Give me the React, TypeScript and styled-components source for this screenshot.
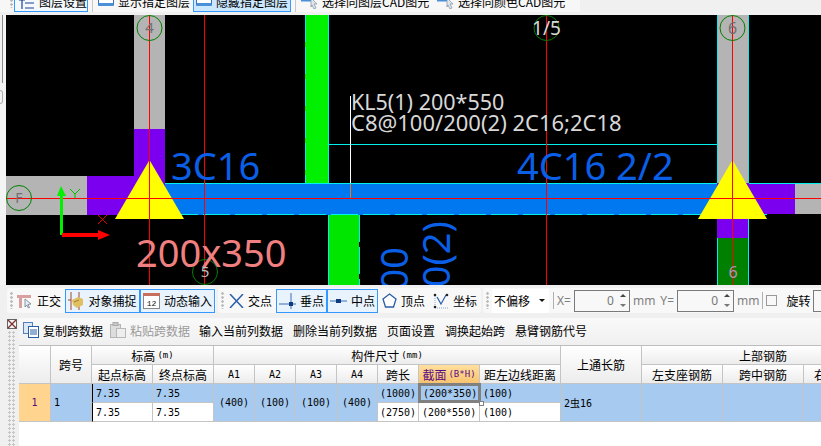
import React from "react";
import styled, { createGlobalStyle, css } from "styled-components";

const GlobalStyle = createGlobalStyle`
  html, body { margin: 0; padding: 0; background: #f0f0f0; }
  body { font-family: "Noto Sans CJK SC", "Noto Sans", sans-serif; font-size: 12px; color: #000; }
`;

const CJK = `"Noto Sans CJK SC", "Noto Sans", sans-serif`;
const MONO = `"DejaVu Sans Mono", "Noto Sans CJK SC", monospace`;
const CAD = `"Noto Sans", "Open Sans", sans-serif`;

const Page = styled.div`
  width: 821px;
  height: 446px;
  overflow: hidden;
  display: flex;
  flex-direction: column;
  background: #f0f0f0;
`;

/* ---- top toolbar, cut off by the window edge ---- */
const TopBar = styled.div`
  height: 15px;
  flex: none;
  overflow: hidden;
  background: #f0f0f0;
`;
const TopRow = styled.div`
  display: flex;
  align-items: stretch;
  height: 21px;
  margin-top: -9px;
  padding-left: 10px;
  width: 570px;
  background: #f7f7f7;
`;
const TopButton = styled.div<{ $w: number; $pad: number; $state?: "hover" | "pressed" }>`
  width: ${p => p.$w}px;
  flex: none;
  box-sizing: border-box;
  display: flex;
  align-items: center;
  gap: 4px;
  padding-left: ${p => p.$pad}px;
  white-space: nowrap;
  border: 1px solid transparent;
  svg { flex: none; }
  ${p =>
    p.$state === "hover" &&
    css`
      margin-left: 1px;
      border-color: #3399ff;
      background: #f4f9ff;
    `}
  ${p =>
    p.$state === "pressed" &&
    css`
      border-color: #3399ff;
      background: #cce8ff;
    `}
`;
const TopSep = styled.div`
  width: 1px;
  margin: 0 4px;
  background: #c8c8c8;
`;

/* ---- drawing area ---- */
const CanvasRow = styled.div`
  display: flex;
  height: 270px;
  flex: none;
`;
const SideStrip = styled.div`
  width: 6px;
  flex: none;
  background: #f4f4f4;
`;
const SideLine = styled.div`
  width: 3px;
  height: 68px;
  box-sizing: border-box;
  border-right: 1px solid #8a8a8a;
  background: #f0f0f0;
`;
const SideTab = styled.div`
  width: 3px;
  height: 14px;
  margin-top: 7px;
  box-sizing: border-box;
  border: 1px solid #b0b0b0;
  border-left: none;
  border-radius: 0 3px 3px 0;
`;
const Canvas = styled.svg`
  display: block;
  flex: 1;
  height: 270px;
  background: #000;
`;

/* ---- snap toolbar ---- */
const SnapBar = styled.div`
  display: flex;
  height: 33px;
  flex: none;
  padding: 3px 0 0 7px;
  box-sizing: border-box;
  gap: 2px;
  overflow: hidden;
`;
const Band = styled.div<{ $w: number }>`
  width: ${p => p.$w}px;
  flex: none;
  height: 25px;
  display: flex;
  align-items: center;
  padding-left: 3px;
  box-sizing: border-box;
  background: #f8f8f8;
  border-radius: 3px;
`;
const Grip = styled.div`
  width: 3px;
  height: 17px;
  flex: none;
  background: radial-gradient(circle at 1.5px 1.5px, #bdbdbd 1.2px, transparent 1.5px);
  background-size: 3px 4px;
`;
const Tool = styled.div<{ $w: number; $on?: boolean; $ml?: number }>`
  width: ${p => p.$w}px;
  margin-left: ${p => p.$ml || 0}px;
  height: 24px;
  flex: none;
  box-sizing: border-box;
  display: flex;
  align-items: center;
  gap: 4px;
  white-space: nowrap;
  ${p =>
    p.$on &&
    css`
      justify-content: center;
      border: 1px solid #3399ff;
      background: #e8f3fd;
    `}
`;
const Combo = styled.div`
  width: 57px;
  height: 24px;
  margin-left: 3px;
  flex: none;
  background: #fff;
  display: flex;
  align-items: center;
  justify-content: space-between;
  padding: 0 2px;
  box-sizing: border-box;
  &::after {
    content: "";
    border-top: 3px solid #111;
    border-left: 3px solid transparent;
    border-right: 3px solid transparent;
    margin-right: 2px;
  }
`;
const BarSep = styled.div<{ $mx: number }>`
  width: 1px;
  height: 17px;
  flex: none;
  margin: 0 ${p => p.$mx}px;
  background: #b0b0b0;
`;
const Dim = styled.span<{ $ml?: number }>`
  color: #808080;
  margin-left: ${p => p.$ml || 0}px;
  white-space: nowrap;
  font-size: 12px;
  font-family: "Noto Sans", sans-serif;
`;
const RotateLabel = styled.span`
  margin-left: 9px;
  white-space: nowrap;
`;
const Spin = styled.div<{ $w: number }>`
  width: ${p => p.$w}px;
  height: 22px;
  flex: none;
  margin-left: 3px;
  box-sizing: border-box;
  border: 1px solid #7a7a7a;
  background: #f8f8f8;
  color: #777;
  display: flex;
  justify-content: flex-end;
  align-items: center;
  padding-right: 3px;
  gap: 6px;
  font-family: "Noto Sans", sans-serif;
  font-size: 12px;
`;
const SpinArrows = styled.div`
  display: flex;
  flex-direction: column;
  gap: 7px;
  &::before,
  &::after {
    content: "";
    display: block;
    border-left: 3px solid transparent;
    border-right: 3px solid transparent;
  }
  &::before { border-bottom: 3px solid #444; }
  &::after { border-top: 3px solid #777; }
`;
const CheckBox = styled.div`
  width: 11px;
  height: 11px;
  flex: none;
  box-sizing: border-box;
  border: 1px solid #999;
  background: #f8f8f8;
`;

/* ---- lower pane ---- */
const Pane = styled.div`
  flex: 1;
  display: flex;
  min-height: 0;
`;
const Gutter = styled.div`
  width: 19px;
  flex: none;
  padding: 1px 0 0 7px;
  box-sizing: border-box;
  display: flex;
  flex-direction: column;
  gap: 2px;
  svg { flex: none; }
`;
const GutterDots = styled.div`
  flex: 1;
  width: 8px;
  margin-left: 1px;
  background: radial-gradient(circle at 1.5px 1.5px, #c6c6c6 1px, transparent 1.3px);
  background-size: 4px 4px;
`;
const PaneMain = styled.div`
  flex: 1;
  min-width: 0;
  display: flex;
  flex-direction: column;
`;
const DataBar = styled.div`
  height: 24px;
  flex: none;
  display: flex;
  align-items: center;
  padding-left: 4px;
  background: linear-gradient(#f9f9f9, #f1f1f1);
  white-space: nowrap;
`;
const DataAction = styled.div<{ $off?: boolean; $w: number }>`
  width: ${p => p.$w}px;
  flex: none;
  display: flex;
  align-items: center;
  gap: 4px;
  color: ${p => (p.$off ? "#9a9a9a" : "#000")};
`;
const GridWrap = styled.div`
  flex: 1;
  margin-top: 3px;
  border-top: 1px solid #bdbdbd;
  background: #fff;
  overflow: hidden;
`;
const Grid = styled.div`
  display: grid;
  width: 900px;
  grid-template-columns: 32px 41px 61px 61px 41px 41px 41px 41px 41px 61px 81px 81px 81px 81px 81px;
  grid-template-rows: 19px 19px 19px 19px;
`;
const HeadCell = styled.div<{ $col?: number; $row?: number; $active?: boolean; $mono?: boolean }>`
  grid-column: span ${p => p.$col || 1};
  grid-row: span ${p => p.$row || 1};
  box-sizing: border-box;
  display: flex;
  align-items: center;
  justify-content: center;
  white-space: nowrap;
  overflow: hidden;
  border-right: 1px solid #c4c4c4;
  border-bottom: 1px solid #c4c4c4;
  background: linear-gradient(#ffffff, #ececec);
  font-family: ${p => (p.$mono ? MONO : CJK)};
  font-size: ${p => (p.$mono ? "10px" : "12px")};
  ${p =>
    p.$active &&
    css`
      background: linear-gradient(#ffdf9e, #f6c36f);
      color: #5b0a80;
    `}
`;
const Small = styled.span`
  font-family: ${MONO};
  font-size: 9px;
  margin-left: 2px;
`;
const Cell = styled.div<{ $row?: number; $white?: boolean; $freeze?: boolean; $center?: boolean; $sel?: boolean }>`
  grid-row: span ${p => p.$row || 1};
  box-sizing: border-box;
  position: relative;
  display: flex;
  align-items: center;
  justify-content: ${p => (p.$center ? "center" : "flex-start")};
  padding-left: ${p => (p.$center ? 0 : 3)}px;
  white-space: nowrap;
  background: ${p => (p.$white ? "#fff" : "#a6caf0")};
  border-right: 1px solid #c4c4c4;
  border-bottom: 1px solid #c4c4c4;
  border-left: ${p => (p.$freeze ? "1px solid #000" : "none")};
  font-family: ${MONO};
  font-size: 10px;
  ${p =>
    p.$sel &&
    css`
      margin: -1px -1px 0 -1px;
      padding-left: 2px;
      border: 3px solid #808080;
      z-index: 2;
      &::after {
        content: "";
        position: absolute;
        right: -6px;
        bottom: -6px;
        width: 3px;
        height: 3px;
        background: #fff;
        border: 1px solid #808080;
      }
    `}
`;
const RowNumber = styled(Cell)`
  background: #ffd48e;
  color: #5b0a80;
  justify-content: center;
  padding-left: 0;
`;

/* ---- icons ---- */
const LayerIcon = () => (
  <svg width="16" height="14" viewBox="0 0 16 14">
    <path d="M6 3h9M6 8h9M6 13h9M3 0v14M0 5h6" stroke="#1f3f90" strokeWidth="1.2" fill="none" />
  </svg>
);
const CadIcon = () => (
  <svg width="16" height="14" viewBox="0 0 16 14">
    <rect x="0.5" y="0" width="15" height="10" fill="#fff" stroke="#3a6fb5" />
    <rect x="0.5" y="8" width="15" height="3" fill="#4a90d9" />
  </svg>
);
const CursorIcon = () => (
  <svg width="17" height="15" viewBox="0 0 17 15">
    <path d="M0 6h10" stroke="#4a90d9" strokeWidth="3" />
    <path d="M10 4l6 6h-3l2 4-2 1-2-4-1 2z" fill="#dfe6ee" stroke="#8090a0" strokeWidth="0.7" />
  </svg>
);
const OrthoIcon = () => (
  <svg width="16" height="16" viewBox="0 0 16 16">
    <path d="M0 2h14v3H5v10H2V5H0z" fill="#d9a0a0" />
    <path d="M8 6l6 5-3 .5 1.5 3-1.2.5-1.5-3L8 14z" fill="#e6eef5" stroke="#607080" strokeWidth="0.7" />
  </svg>
);
const SnapIcon = () => (
  <svg width="16" height="18" viewBox="0 0 16 18">
    <path d="M3 0v18M11 0v18" stroke="#9c4a30" strokeWidth="1" />
    <path d="M0 8h3" stroke="#9c4a30" />
    <path d="M4 8l6-3 5 2v6l-6 3-4-3z" fill="#e0c060" />
    <path d="M6 10l5-2" stroke="#a08030" />
  </svg>
);
const DynamicIcon = () => (
  <svg width="17" height="17" viewBox="0 0 17 17">
    <rect x="0.5" y="1.5" width="16" height="15" fill="#fff" stroke="#888" />
    <rect x="0" y="1" width="17" height="3" fill="#c87060" />
    <text x="8.5" y="14" textAnchor="middle" fontSize="8" fontFamily="Liberation Mono, monospace" fill="#111">
      12
    </text>
  </svg>
);
const CrossIcon = () => (
  <svg width="15" height="14" viewBox="0 0 15 14">
    <path d="M1 0l13 14M14 0L1 14" stroke="#2a5fa8" strokeWidth="1.5" />
  </svg>
);
const PerpIcon = () => (
  <svg width="17" height="18" viewBox="0 0 17 18">
    <path d="M0 12h17" stroke="#3a6fb5" />
    <path d="M12 1v16" stroke="#3a6fb5" />
    <rect x="10" y="10" width="4" height="4" fill="#103a80" />
  </svg>
);
const MidIcon = () => (
  <svg width="17" height="8" viewBox="0 0 17 8">
    <path d="M0 4h17" stroke="#3a6fb5" />
    <rect x="6" y="2" width="5" height="4" fill="#103a80" />
  </svg>
);
const VertexIcon = () => (
  <svg width="15" height="15" viewBox="0 0 15 15">
    <path d="M7.5 1L14 6l-2.5 8h-8L1 6z" fill="#fff" stroke="#2a5fa8" strokeWidth="1.3" />
  </svg>
);
const CoordIcon = () => (
  <svg width="16" height="16" viewBox="0 0 16 16">
    <path d="M2 1v14h13" stroke="#8aa8d8" strokeDasharray="1 1" fill="none" />
    <path d="M4 4l4 7 5-9" stroke="#2a5fa8" strokeWidth="1.2" fill="none" />
    <circle cx="2" cy="14" r="1.3" fill="#222" />
    <circle cx="14" cy="2" r="1.3" fill="#222" />
    <circle cx="2" cy="2" r="1.3" fill="#222" />
  </svg>
);
const CopyIcon = () => (
  <svg width="16" height="16" viewBox="0 0 16 16">
    <rect x="0.5" y="0.5" width="9" height="11" fill="#dce8f5" stroke="#5580b8" />
    <rect x="5.5" y="4.5" width="10" height="11" fill="#fff" stroke="#2a5fa8" />
    <path d="M7 8h7M7 10h7M7 12h7" stroke="#2a5fa8" />
  </svg>
);
const PasteIcon = () => (
  <svg width="16" height="16" viewBox="0 0 16 16">
    <rect x="0.5" y="2.5" width="10" height="13" fill="#ddd" stroke="#b5b5b5" />
    <rect x="3" y="0.5" width="5" height="3" fill="#c8c8c8" stroke="#aaa" />
    <rect x="6.5" y="6.5" width="9" height="9" fill="#eee" stroke="#b8b8b8" />
  </svg>
);
const CloseIcon = () => (
  <svg width="10" height="10" viewBox="0 0 10 10">
    <rect x="0.5" y="0.5" width="9" height="9" fill="#f4f4f4" stroke="#666" />
    <path d="M1 1l8 8M9 1L1 9" stroke="#7a3030" strokeWidth="1.3" />
  </svg>
);

/* ---- CAD drawing: coordinates are page pixels, viewBox starts at the canvas corner ---- */
const Axis = ({ cx, cy, label, color, size }: { cx: number; cy: number; label: string; color: string; size: number }) => (
  <g>
    <circle cx={cx} cy={cy} r={12.5} fill="none" stroke="#008000" />
    <text x={cx} y={cy + size * 0.36} textAnchor="middle" fontSize={size} fontFamily={CAD} fill={color}>
      {label}
    </text>
  </g>
);

const Drawing = () => (
  <Canvas viewBox="6 15 815 270">
    <g shapeRendering="crispEdges">
      {/* columns */}
      <rect x="134" y="15" width="31" height="114" fill="#b4b4b4" />
      <rect x="134" y="129" width="31" height="86" fill="#7c00f0" />
      <rect x="6" y="176" width="81" height="39" fill="#b4b4b4" />
      <rect x="87" y="176" width="47" height="39" fill="#7c00f0" />
      <rect x="717" y="15" width="32" height="200" fill="#b4b4b4" />
      <rect x="749" y="184" width="46" height="30" fill="#7c00f0" />
      <rect x="795" y="184" width="26" height="30" fill="#b4b4b4" />
      <rect x="717" y="183" width="32" height="55" fill="#7c00f0" />
      <rect x="717" y="238" width="32" height="47" fill="#008000" />
      {/* walls */}
      <rect x="305" y="15" width="24" height="168" fill="#00f000" />
      <rect x="328" y="215" width="31" height="70" fill="#00e600" />
      {/* beam */}
      <rect x="165" y="183" width="552" height="32" fill="#0078f0" />
      <rect x="350" y="183" width="1" height="15" fill="#e87820" />
      {/* outlines */}
      <path d="M328.5 15V183M328.5 215V285M328 144.5H717M165 183.5H717M749 183.5H821M717.5 15V183M748.5 15V183M748.5 214V285M717.5 238V285M749 214.5H767" stroke="#00f0f0" fill="none" />
      <path d="M305.5 15V183M359.5 215V285M171 214.5H701" stroke="#00f0f0" strokeDasharray="27 5" fill="none" />
      <path d="M350.5 96V183" stroke="#fff" />
    </g>

    <polygon points="149.5,160 184,219 115,219" fill="#ffff00" />
    <polygon points="732.5,160 767,219 698,219" fill="#ffff00" />

    <g shapeRendering="crispEdges">
      <path d="M149.5 15V285M204.5 15V285M546.5 15V285M732.5 15V285M6 198.5H821" stroke="#ff0000" fill="none" />
    </g>

    {/* axis bubbles */}
    <Axis cx={149.5} cy={28} label="4" color="#707070" size={15} />
    <Axis cx={546.5} cy={28} label="1/5" color="#d8d8d8" size={19} />
    <Axis cx={732.5} cy={28} label="6" color="#707070" size={16} />
    <Axis cx={19} cy={198} label="F" color="#707070" size={14} />
    <Axis cx={205} cy={272} label="5" color="#c0c0c0" size={15} />
    <text x="733" y="278" textAnchor="middle" fontSize="16" fontFamily={CAD} fill="#b890b8">
      6
    </text>

    {/* ucs icon */}
    <path d="M61 186l-4 10h3v39h3v-39h3z" fill="#00f000" />
    <path d="M62 233h36v-3l12 5-12 5v-3H62z" fill="#ff0000" />
    <path d="M70 189l5 5 5-5M75 194v4" stroke="#00c000" fill="none" />
    <path d="M98 215l9 9M107 215l-9 9" stroke="#e00000" fill="none" />

    {/* labels */}
    <text x="351" y="110" fontSize="21.5" fontFamily={CAD} fill="#d8d8d8">
      KL5(1) 200*550
    </text>
    <text x="351" y="131" fontSize="22" fontFamily={CAD} fill="#d8d8d8">
      C8@100/200(2) 2C16;2C18
    </text>
    <text x="171" y="180" fontSize="38" fontFamily={CAD} fill="#0a5fe6">
      3C16
    </text>
    <text x="517" y="180" fontSize="38" fontFamily={CAD} fill="#0a5fe6">
      4C16 2/2
    </text>
    <text x="136" y="267" fontSize="38" fontFamily={CAD} fill="#f08080">
      200x350
    </text>
    <text transform="translate(408 247) rotate(-90)" textAnchor="end" fontSize="38" fontFamily={CAD} fill="#0a5fe6">
      C8@100
    </text>
    <text transform="translate(450 221) rotate(-90)" textAnchor="end" fontSize="38" fontFamily={CAD} fill="#0a5fe6">
      C8@200(2)
    </text>
  </Canvas>
);

export default function App() {
  return (
    <Page>
      <GlobalStyle />
      <TopBar>
        <TopRow>
          <Grip />
          <TopButton $w={74} $pad={4} $state="hover">
            <LayerIcon />
            图层设置
          </TopButton>
          <TopSep />
          <TopButton $w={96} $pad={0}>
            <CadIcon />
            显示指定图层
          </TopButton>
          <TopButton $w={98} $pad={2} $state="pressed">
            <CadIcon />
            隐藏指定图层
          </TopButton>
          <TopSep />
          <TopButton $w={136} $pad={0}>
            <CursorIcon />
            选择同图层CAD图元
          </TopButton>
          <TopButton $w={136} $pad={0}>
            <CursorIcon />
            选择同颜色CAD图元
          </TopButton>
        </TopRow>
      </TopBar>

      <CanvasRow>
        <SideStrip>
          <SideLine />
          <SideTab />
        </SideStrip>
        <Drawing />
      </CanvasRow>

      <SnapBar>
        <Band $w={209}>
          <Grip />
          <Tool $w={48} $ml={4}>
            <OrthoIcon />
            正交
          </Tool>
          <Tool $w={75} $on>
            <SnapIcon />
            对象捕捉
          </Tool>
          <Tool $w={75} $on>
            <DynamicIcon />
            动态输入
          </Tool>
        </Band>
        <Band $w={263}>
          <Grip />
          <Tool $w={47} $ml={5}>
            <CrossIcon />
            交点
          </Tool>
          <Tool $w={51} $on>
            <PerpIcon />
            垂点
          </Tool>
          <Tool $w={51} $on>
            <MidIcon />
            中点
          </Tool>
          <Tool $w={51} $ml={4}>
            <VertexIcon />
            顶点
          </Tool>
          <Tool $w={47}>
            <CoordIcon />
            坐标
          </Tool>
        </Band>
        <Band $w={340}>
          <Grip />
          <Combo>不偏移</Combo>
          <BarSep $mx={4} />
          <Dim $ml={-1}>X=</Dim>
          <Spin $w={56}>
            0
            <SpinArrows />
          </Spin>
          <Dim $ml={3}>mm</Dim>
          <Dim $ml={5}>Y=</Dim>
          <Spin $w={57}>
            0
            <SpinArrows />
          </Spin>
          <Dim $ml={3}>mm</Dim>
          <BarSep $mx={3} />
          <CheckBox />
          <RotateLabel>旋转</RotateLabel>
          <Spin $w={40} />
        </Band>
      </SnapBar>

      <Pane>
        <Gutter>
          <CloseIcon />
          <GutterDots />
        </Gutter>
        <PaneMain>
          <DataBar>
            <DataAction $w={87}>
              <CopyIcon />
              复制跨数据
            </DataAction>
            <DataAction $w={89} $off>
              <PasteIcon />
              粘贴跨数据
            </DataAction>
            <DataAction $w={94}>输入当前列数据</DataAction>
            <DataAction $w={94}>删除当前列数据</DataAction>
            <DataAction $w={58}>页面设置</DataAction>
            <DataAction $w={70}>调换起始跨</DataAction>
            <DataAction $w={80}>悬臂钢筋代号</DataAction>
          </DataBar>
          <GridWrap>
            <Grid>
              <HeadCell $row={2} />
              <HeadCell $row={2}>跨号</HeadCell>
              <HeadCell $col={2}>
                标高<Small>(m)</Small>
              </HeadCell>
              <HeadCell $col={7}>
                构件尺寸<Small>(mm)</Small>
              </HeadCell>
              <HeadCell $row={2}>上通长筋</HeadCell>
              <HeadCell $col={3}>上部钢筋</HeadCell>
              <HeadCell>起点标高</HeadCell>
              <HeadCell>终点标高</HeadCell>
              <HeadCell $mono>A1</HeadCell>
              <HeadCell $mono>A2</HeadCell>
              <HeadCell $mono>A3</HeadCell>
              <HeadCell $mono>A4</HeadCell>
              <HeadCell>跨长</HeadCell>
              <HeadCell $active>
                截面<Small>(B*H)</Small>
              </HeadCell>
              <HeadCell>距左边线距离</HeadCell>
              <HeadCell>左支座钢筋</HeadCell>
              <HeadCell>跨中钢筋</HeadCell>
              <HeadCell>右支座钢筋</HeadCell>

              <RowNumber $row={2}>1</RowNumber>
              <Cell $row={2}>1</Cell>
              <Cell $freeze>7.35</Cell>
              <Cell>7.35</Cell>
              <Cell $row={2} $center>(400)</Cell>
              <Cell $row={2} $center>(100)</Cell>
              <Cell $row={2} $center>(100)</Cell>
              <Cell $row={2} $center>(400)</Cell>
              <Cell $center>(1000)</Cell>
              <Cell $sel>(200*350)</Cell>
              <Cell>(100)</Cell>
              <Cell $row={2}>2虫16</Cell>
              <Cell $row={2} />
              <Cell $row={2} />
              <Cell $row={2} />
              <Cell $white $freeze>7.35</Cell>
              <Cell $white>7.35</Cell>
              <Cell $white $center>(2750)</Cell>
              <Cell $white>(200*550)</Cell>
              <Cell $white>(100)</Cell>
            </Grid>
          </GridWrap>
        </PaneMain>
      </Pane>
    </Page>
  );
}
